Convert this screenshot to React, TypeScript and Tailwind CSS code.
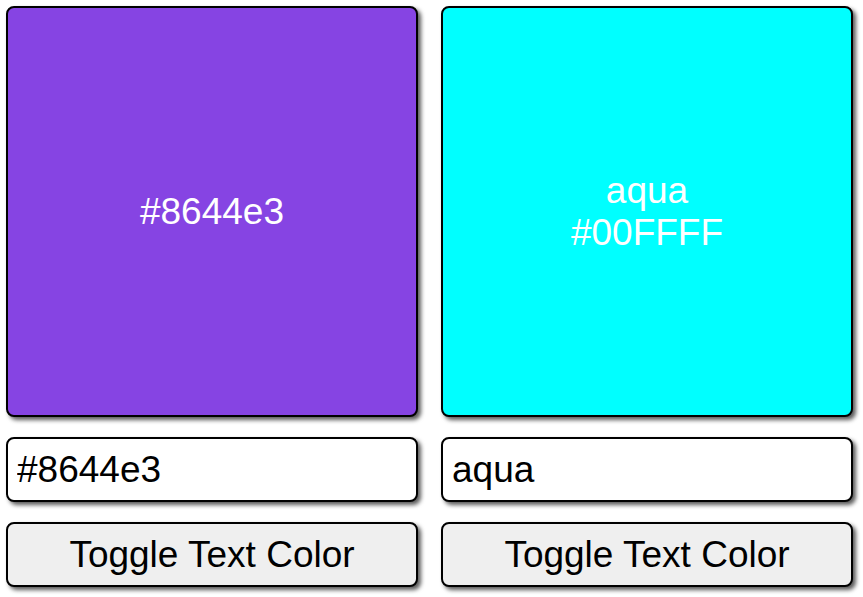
import React from "react";

function Swatch({ boxClass, lines, value }: { boxClass: string; lines: string[]; value: string }) {
  return (
    <div className="flex w-[412px] flex-col">
      <div
        className={
          "flex h-[411px] flex-col items-center justify-center rounded-[8px] border-2 border-black text-[37px] leading-[1.13] text-white shadow-[3px_3px_4px_rgba(0,0,0,0.65)] " +
          boxClass
        }
      >
        {lines.map((l) => (
          <div key={l}>{l}</div>
        ))}
      </div>
      <input
        readOnly
        value={value}
        className="mt-[20px] h-[65px] w-full rounded-[8px] border-2 border-black bg-white px-[9px] font-['Liberation_Sans',Arial,sans-serif] text-[37px] text-black shadow-[3px_3px_4px_rgba(0,0,0,0.65)] outline-none"
      />
      <button className="mt-[20px] h-[65px] w-full rounded-[8px] border-2 border-black bg-[#efefef] font-['Liberation_Sans',Arial,sans-serif] text-[37px] text-black shadow-[3px_3px_4px_rgba(0,0,0,0.65)]">
        Toggle Text Color
      </button>
    </div>
  );
}

export default function App() {
  return (
    <div className="flex h-[597px] w-[863px] gap-[23px] bg-white p-[6px] font-['Liberation_Sans',Arial,sans-serif]">
      <Swatch boxClass="bg-[#8644e3]" lines={["#8644e3"]} value="#8644e3" />
      <Swatch boxClass="bg-[#00ffff]" lines={["aqua", "#00FFFF"]} value="aqua" />
    </div>
  );
}
